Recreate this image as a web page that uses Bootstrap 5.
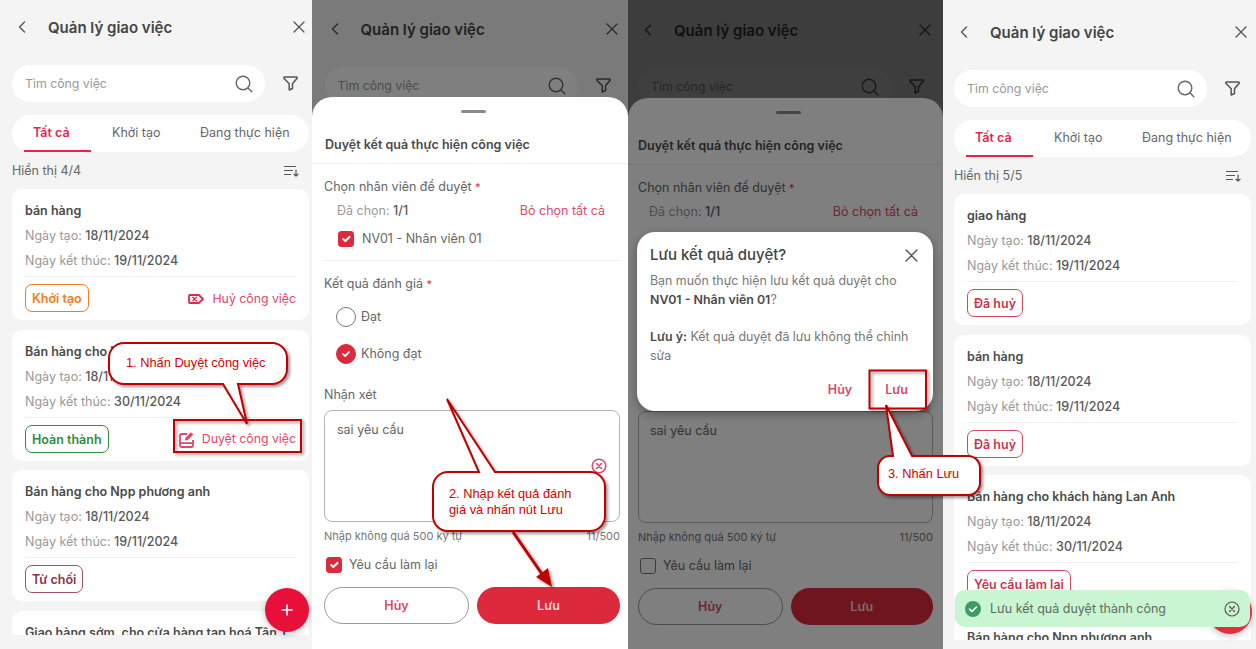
<!DOCTYPE html>
<html lang="vi">
<head>
  <meta charset="UTF-8">
  <meta name="viewport" content="width=device-width, initial-scale=1">
  <title>Quản lý giao việc</title>
  <link href="https://cdn.jsdelivr.net/npm/bootstrap@5.3.0/dist/css/bootstrap.min.css" rel="stylesheet">
  <style>
    body {
      margin: 0;
      width: 1256px;
      height: 649px;
      overflow: hidden;
      background: #f4f4f4;
      font-family: Inter, "Noto Sans", sans-serif;
      font-size: 12.5px;
      color: #555;
      position: relative;
    }

    .phone { position: relative; height: 649px; overflow: hidden; background: #f4f4f4; flex: none; }
    .phone-inner { width: 297px; margin-left: var(--pl); padding-top: var(--pt); }
    .p1 { width: 312px; --pl: 12px; --pt: 0px; --sw: 297px; }
    .p2 { width: 316px; --pl: 12.5px; --pt: 2px; --sw: 296px; }
    .p3 { width: 315px; --pl: 10px; --pt: 3px; --sw: 295px; }
    .p4 { width: 313px; --pl: 11px; --pt: 5px; --sw: 297px; }

    .top-bar { height: 54px; padding-top: 2px; position: relative; }
    .top-bar .ic-back { position: absolute; left: 4px; top: 21px; }
    .top-bar .ic-close { position: absolute; left: 281px; top: 21px; }
    .top-title { margin-left: 36px; font-size: 15px; font-weight: 600; color: #444; }

    .search-row { margin-top: 11px; height: 37px; }
    .search-box { width: 253px; height: 37px; background: #fff; border-radius: 19px; padding: 0 12px 0 13px; color: #999; }
    .search-box span { margin-top: 2px; font-size: 12.3px; }
    .search-row .ic-filter { margin-left: 18px; }

    .tab-strip { margin-top: 13px; height: 37px; background: #fff; border-radius: 19px; flex-wrap: nowrap; }
    .tab-link { display: block; height: 37px; line-height: 35px; color: #666; white-space: nowrap; text-decoration: none; }
    .tab-link.on { width: 67px; margin-left: 12px; padding-left: 9px; color: #e5264b; font-weight: 600; border-bottom: 2px solid #e5264b; }
    .tab-link.t2 { margin-left: 21px; }
    .tab-link.t3 { margin-left: 39.5px; }

    .show-row { height: 37px; color: #666; padding-right: 10px; }
    .show-row span { margin-top: 2px; }

    .task-list { height: 446px; overflow: hidden; }
    .task-card { height: 131px; margin-bottom: 9.5px; border: 0; border-radius: 10px; padding: 12px 13px 0; }
    .task-name { line-height: 20px; font-weight: 600; color: #4a4a4a; white-space: nowrap; }
    .task-line { line-height: 20px; margin-top: 5px; color: #999; }
    .task-line b { font-weight: 500; color: #595959; }
    .task-foot { margin-top: 5px; padding-top: 7px; border-top: 1px solid #eee; }
    .tag-state { height: 28px; line-height: 27px; padding: 0 6px; border: 1.5px solid; border-radius: 7px; font-weight: 600; background: #fff; }
    .tag-orange { color: #f47b20; border-color: #f47b20; }
    .tag-green { color: #2f8b3f; border-color: #2f8b3f; }
    .tag-plum { color: #8f2f4a; border-color: #a05068; }
    .tag-red { color: #c9344d; border-color: #d0485f; }
    .task-act { color: #e0476a; gap: 8px; font-size: 12.3px; margin-top: 2px; }

    .fab { position: absolute; width: 44px; height: 44px; border-radius: 50%; background: #e8103a; box-shadow: 0 2px 6px rgba(0,0,0,.25); }
    .p1 .fab { left: 265px; top: 588px; }
    .p4 .fab { left: 265px; top: 590px; background: #e0303f; }

    .backdrop { position: absolute; inset: 0; background: rgba(0,0,0,.5); }

    .sheet { position: absolute; left: 0; right: 0; top: 97px; bottom: 0; background: #fff; border-radius: 20px 20px 0 0; padding-top: 13px; }
    .p3 .sheet { top: 98px; }
    .sheet-body { width: var(--sw); margin-left: 12px; }
    .p3 .sheet-body { margin-left: 10px; }
    .sheet-handle { width: 25px; height: 3px; margin: 0 auto; background: #8a8a8a; border-radius: 2px; position: relative; left: 3px; }
    .sheet-title { margin-top: 22px; margin-bottom: 8px; padding-left: 1px; line-height: 20px; font-weight: 600; color: #4a4a4a; }
    .p3 .sheet-title { padding-left: 0; }
    .sheet-rule { border-top: 1px solid #eee; }
    .f-label { line-height: 20px; color: #666; }
    .f-label i { font-style: normal; font-size: 11px; color: #e5264b; }
    .l-a { margin-top: 13px; }
    .l-b { margin-top: 4px; padding: 0 15px 0 13px; line-height: 20px; color: #999; }
    .p3 .l-b { padding-left: 11px; }
    .l-b b { font-weight: 500; color: #595959; }
    .l-b span { color: #e0476a; }
    .l-c { margin-top: 8px; padding-left: 14px; height: 20px; color: #666; gap: 8px; }
    .l-d { margin-top: 11px; margin-bottom: 13px; }
    .l-e { margin-top: 12px; height: 22px; padding-left: 12px; gap: 5px; color: #666; }
    .l-f { margin-top: 15px; }
    .l-g { margin-top: 20px; }

    .form-check-input { width: 16px; height: 16px; margin: 0; flex: none; border-radius: 3px; border-color: #777; }
    .form-check-input:checked { background-color: #dc2a3c; border-color: #dc2a3c; }
    .form-check-input[type=radio] { width: 20px; height: 20px; border-radius: 50%; }
    .form-check-input[type=radio]:checked {
      background-size: 12px;
      background-image: url("data:image/svg+xml,%3csvg xmlns='http://www.w3.org/2000/svg' viewBox='0 0 20 20'%3e%3cpath fill='none' stroke='%23fff' stroke-linecap='round' stroke-linejoin='round' stroke-width='3' d='m5 10 3.5 3.5L15 7'/%3e%3c/svg%3e");
    }

    .note-wrap { margin-top: 4.500px; position: relative; }
    .note-box { height: 112px; padding: 10px 12px 8px; border: 1px solid #b5b5b5; border-radius: 8px; font-size: 12.5px; color: #666; resize: none; box-shadow: none; }
    .p3 .note-box { padding-left: 11px; }
    .note-clear { position: absolute; right: 13px; top: 48px; }
    .note-hint { margin-top: 5px; line-height: 18px; font-size: 11px; color: #777; }
    .l-h { margin-top: 10.500px; height: 20px; padding-left: 2px; gap: 7px; color: #666; }
    .sheet-btns { margin-top: 12px; gap: 8px; }
    .btn-pill { flex: 1; height: 37px; padding: 2px 0 0; border-radius: 19px; font-size: 12.5px; font-weight: 600; }
    .btn-ghost { background: #fff; border: 1px solid #9a9a9a; color: #e0476a; }
    .btn-fill { background: #dc2a3c; border: 0; color: #f6d6da; }

    .confirm-box { position: absolute; left: 9px; top: 232px; width: 296px; height: 179px; background: #fff; border-radius: 18px; padding: 13px 13px 0; box-shadow: 0 3px 10px rgba(0,0,0,.3); }
    .confirm-title { font-size: 15px; line-height: 20px; font-weight: 500; color: #444; }
    .confirm-x { margin-right: 2px; }
    .confirm-text { margin-top: 7px; line-height: 18.7px; font-size: 12.4px; color: #777; }
    .confirm-text b { font-weight: 600; color: #4a4a4a; }
    .confirm-btns { position: absolute; right: 25px; top: 148px; gap: 33px; font-weight: 600; line-height: 20px; color: #d9476a; }

    .toast-ok { position: absolute; left: 12px; top: 590px; width: 295px; height: 37px; padding: 0 10px; gap: 9px; background: #c9f5d3; border-radius: 10px; color: #5f6b63; }
    .toast-ok span { margin-top: 2px; }

    .note-layer { position: absolute; left: 0; top: 0; z-index: 10; pointer-events: none; }
    .note-layer text { font-family: "Liberation Sans", Arial, sans-serif; font-size: 12.8px; fill: #d40000; }
  </style>
</head>
<body>

<svg width="0" height="0" class="d-block position-absolute">
  <defs>
    <symbol id="i-back" viewBox="0 0 12 12"><path d="M8.5 1 3.5 6l5 5" fill="none" stroke="#555" stroke-width="1.4" stroke-linecap="round" stroke-linejoin="round"/></symbol>
    <symbol id="i-close" viewBox="0 0 12 12"><path d="M1 1l10 10M11 1 1 11" fill="none" stroke="#555" stroke-width="1.3" stroke-linecap="round"/></symbol>
    <symbol id="i-search" viewBox="0 0 18 18"><circle cx="8" cy="8" r="6.8" fill="none" stroke="#666" stroke-width="1.4"/><path d="m13 13 3.8 3.8" stroke="#666" stroke-width="1.4" stroke-linecap="round"/></symbol>
    <symbol id="i-filter" viewBox="0 0 15 15"><path d="M1.500 1h12a.8.8 0 0 1 .6 1.300L9.500 7.800V12.500L6.200 14V7.800L.9 2.300A.8.8 0 0 1 1.500 1z" fill="none" stroke="#555" stroke-width="1.500" stroke-linejoin="round"/></symbol>
    <symbol id="i-sort" viewBox="0 0 15 12"><path d="M.5 1.500h11M.5 5.500h8M.5 9.500h6M12 5v6M10 9.200 12 11l2-1.800" fill="none" stroke="#555" stroke-width="1.200" stroke-linecap="round" stroke-linejoin="round"/></symbol>
    <symbol id="i-tag" viewBox="0 0 16 10"><path d="M2 1h8.800L15 5l-4.200 4H2a1 1 0 0 1-1-1V2a1 1 0 0 1 1-1z" fill="none" stroke="#e5264b" stroke-width="1.800" stroke-linejoin="round"/><path d="m5 3.300 3.400 3.400m0-3.400L5 6.700" stroke="#e5264b" stroke-width="1.500" stroke-linecap="round"/></symbol>
    <symbol id="i-edit" viewBox="0 0 15 17"><path d="M8 3H2.500A1.500 1.500 0 0 0 1 4.500v10A1.500 1.500 0 0 0 2.500 16h10a1.500 1.500 0 0 0 1.500-1.500V9M1 12.200h13" fill="none" stroke="#e0476a" stroke-width="1.800"/><path d="m6 9.500.5-2.700L12 1.200l2.300 2.200-5.500 5.500z" fill="#e0476a"/></symbol>
    <symbol id="i-plus" viewBox="0 0 12 12"><path d="M6 1v10M1 6h10" stroke="#fff" stroke-width="1.600" stroke-linecap="round"/></symbol>
    <symbol id="i-clear" viewBox="0 0 16 16"><circle cx="8" cy="8" r="6.800" fill="none" stroke="#e0476a" stroke-width="1.500"/><path d="m5.500 5.500 5 5m0-5-5 5" stroke="#e0476a" stroke-width="1.600" stroke-linecap="round"/></symbol>
    <symbol id="i-ok" viewBox="0 0 16 16"><circle cx="8" cy="8" r="8" fill="#3f9a68"/><path d="m4.500 8.200 2.400 2.300 4.500-4.500" fill="none" stroke="#fff" stroke-width="1.600" stroke-linecap="round" stroke-linejoin="round"/></symbol>
    <symbol id="i-toast-x" viewBox="0 0 16 16"><circle cx="8" cy="8" r="7" fill="none" stroke="#555" stroke-width="1.200"/><path d="m5.500 5.500 5 5m0-5-5 5" stroke="#555" stroke-width="1.300" stroke-linecap="round"/></symbol>
  </defs>
</svg>

<div class="d-flex">

  <!-- man 1: danh sach -->
  <div class="phone p1">
    <div class="phone-inner">
      <div class="top-bar d-flex align-items-center">
        <svg class="ic-back" width="12" height="12"><use href="#i-back"/></svg>
        <span class="top-title">Quản lý giao việc</span>
        <svg class="ic-close" width="12" height="12"><use href="#i-close"/></svg>
      </div>
      <div class="search-row d-flex align-items-center">
        <div class="search-box d-flex align-items-center justify-content-between"><span>Tìm công việc</span><svg width="18" height="18"><use href="#i-search"/></svg></div>
        <svg class="ic-filter" width="15" height="15"><use href="#i-filter"/></svg>
      </div>
      <nav class="tab-strip nav">
        <a class="tab-link on">Tất cả</a><a class="tab-link t2">Khởi tạo</a><a class="tab-link t3">Đang thực hiện</a>
      </nav>
      <div class="show-row d-flex align-items-center justify-content-between"><span>Hiển thị 4/4</span><svg width="15" height="12"><use href="#i-sort"/></svg></div>
      <div class="task-list">
        <div class="task-card card">
          <div class="task-name">bán hàng</div>
          <div class="task-line">Ngày tạo: <b>18/11/2024</b></div>
          <div class="task-line">Ngày kết thúc: <b>19/11/2024</b></div>
          <div class="task-foot d-flex align-items-center justify-content-between">
            <span class="tag-state tag-orange">Khởi tạo</span>
            <span class="task-act d-flex align-items-center"><svg width="16" height="10"><use href="#i-tag"/></svg>Huỷ công việc</span>
          </div>
        </div>
        <div class="task-card card">
          <div class="task-name">Bán hàng cho khách hàng Lan Anh</div>
          <div class="task-line">Ngày tạo: <b>18/11/2024</b></div>
          <div class="task-line">Ngày kết thúc: <b>30/11/2024</b></div>
          <div class="task-foot d-flex align-items-center justify-content-between">
            <span class="tag-state tag-green">Hoàn thành</span>
            <span class="task-act d-flex align-items-center"><svg width="15" height="17"><use href="#i-edit"/></svg>Duyệt công việc</span>
          </div>
        </div>
        <div class="task-card card">
          <div class="task-name">Bán hàng cho Npp phương anh</div>
          <div class="task-line">Ngày tạo: <b>18/11/2024</b></div>
          <div class="task-line">Ngày kết thúc: <b>19/11/2024</b></div>
          <div class="task-foot d-flex align-items-center">
            <span class="tag-state tag-plum">Từ chối</span>
          </div>
        </div>
        <div class="task-card card">
          <div class="task-name">Giao hàng sớm, cho cửa hàng tạp hoá Tân T</div>
        </div>
      </div>
    </div>
    <div class="fab d-flex align-items-center justify-content-center"><svg width="12" height="12"><use href="#i-plus"/></svg></div>
  </div>

  <!-- man 2: form duyet -->
  <div class="phone p2">
    <div class="phone-inner">
      <div class="top-bar d-flex align-items-center">
        <svg class="ic-back" width="12" height="12"><use href="#i-back"/></svg>
        <span class="top-title">Quản lý giao việc</span>
        <svg class="ic-close" width="12" height="12"><use href="#i-close"/></svg>
      </div>
      <div class="search-row d-flex align-items-center">
        <div class="search-box d-flex align-items-center justify-content-between"><span>Tìm công việc</span><svg width="18" height="18"><use href="#i-search"/></svg></div>
        <svg class="ic-filter" width="15" height="15"><use href="#i-filter"/></svg>
      </div>
    </div>
    <div class="backdrop"></div>
    <div class="sheet">
      <div class="sheet-handle"></div>
      <div class="sheet-body"><div class="sheet-title">Duyệt kết quả thực hiện công việc</div></div>
      <div class="sheet-rule"></div>
      <div class="sheet-body">
        <div class="f-label l-a">Chọn nhân viên để duyệt <i>*</i></div>
        <div class="l-b d-flex justify-content-between"><div>Đã chọn: <b>1/1</b></div><span>Bỏ chọn tất cả</span></div>
        <div class="l-c d-flex align-items-center"><input class="form-check-input" type="checkbox" checked>NV01 - Nhân viên 01</div>
        <div class="sheet-rule l-d"></div>
        <div class="f-label">Kết quả đánh giá <i>*</i></div>
        <div class="l-e d-flex align-items-center"><input class="form-check-input" type="radio" name="kq2">Đạt</div>
        <div class="l-e l-f d-flex align-items-center"><input class="form-check-input" type="radio" name="kq2" checked>Không đạt</div>
        <div class="f-label l-g">Nhận xét</div>
        <div class="note-wrap">
          <textarea class="note-box form-control">sai yêu cầu</textarea>
          <svg class="note-clear" width="16" height="16"><use href="#i-clear"/></svg>
        </div>
        <div class="note-hint d-flex justify-content-between"><span>Nhập không quá 500 ký tự</span><span>11/500</span></div>
        <div class="l-h d-flex align-items-center"><input class="form-check-input" type="checkbox" checked>Yêu cầu làm lại</div>
        <div class="sheet-btns d-flex">
          <button class="btn btn-pill btn-ghost">Hủy</button>
          <button class="btn btn-pill btn-fill">Lưu</button>
        </div>
      </div>
    </div>
  </div>

  <!-- man 3: hop thoai xac nhan -->
  <div class="phone p3">
    <div class="phone-inner">
      <div class="top-bar d-flex align-items-center">
        <svg class="ic-back" width="12" height="12"><use href="#i-back"/></svg>
        <span class="top-title">Quản lý giao việc</span>
        <svg class="ic-close" width="12" height="12"><use href="#i-close"/></svg>
      </div>
      <div class="search-row d-flex align-items-center">
        <div class="search-box d-flex align-items-center justify-content-between"><span>Tìm công việc</span><svg width="18" height="18"><use href="#i-search"/></svg></div>
        <svg class="ic-filter" width="15" height="15"><use href="#i-filter"/></svg>
      </div>
    </div>
    <div class="backdrop"></div>
    <div class="sheet">
      <div class="sheet-handle"></div>
      <div class="sheet-body"><div class="sheet-title">Duyệt kết quả thực hiện công việc</div></div>
      <div class="sheet-rule"></div>
      <div class="sheet-body">
        <div class="f-label l-a">Chọn nhân viên để duyệt <i>*</i></div>
        <div class="l-b d-flex justify-content-between"><div>Đã chọn: <b>1/1</b></div><span>Bỏ chọn tất cả</span></div>
        <div class="l-c d-flex align-items-center"><input class="form-check-input" type="checkbox" checked>NV01 - Nhân viên 01</div>
        <div class="sheet-rule l-d"></div>
        <div class="f-label">Kết quả đánh giá <i>*</i></div>
        <div class="l-e d-flex align-items-center"><input class="form-check-input" type="radio" name="kq3">Đạt</div>
        <div class="l-e l-f d-flex align-items-center"><input class="form-check-input" type="radio" name="kq3" checked>Không đạt</div>
        <div class="f-label l-g">Nhận xét</div>
        <div class="note-wrap">
          <textarea class="note-box form-control">sai yêu cầu</textarea>
          <svg class="note-clear" width="16" height="16"><use href="#i-clear"/></svg>
        </div>
        <div class="note-hint d-flex justify-content-between"><span>Nhập không quá 500 ký tự</span><span>11/500</span></div>
        <div class="l-h d-flex align-items-center"><input class="form-check-input" type="checkbox">Yêu cầu làm lại</div>
        <div class="sheet-btns d-flex">
          <button class="btn btn-pill btn-ghost">Hủy</button>
          <button class="btn btn-pill btn-fill">Lưu</button>
        </div>
      </div>
    </div>
    <div class="backdrop"></div>
    <div class="confirm-box">
      <div class="d-flex align-items-center justify-content-between">
        <div class="confirm-title">Lưu kết quả duyệt?</div>
        <svg class="confirm-x" width="13" height="13"><use href="#i-close"/></svg>
      </div>
      <div class="confirm-text">Bạn muốn thực hiện lưu kết quả duyệt cho<br><b>NV01 - Nhân viên 01</b>?<br><br><b>Lưu ý:</b> Kết quả duyệt đã lưu không thể chỉnh sửa</div>
      <div class="confirm-btns d-flex"><span>Hủy</span><span>Lưu</span></div>
    </div>
  </div>

  <!-- man 4: ket qua -->
  <div class="phone p4">
    <div class="phone-inner">
      <div class="top-bar d-flex align-items-center">
        <svg class="ic-back" width="12" height="12"><use href="#i-back"/></svg>
        <span class="top-title">Quản lý giao việc</span>
        <svg class="ic-close" width="12" height="12"><use href="#i-close"/></svg>
      </div>
      <div class="search-row d-flex align-items-center">
        <div class="search-box d-flex align-items-center justify-content-between"><span>Tìm công việc</span><svg width="18" height="18"><use href="#i-search"/></svg></div>
        <svg class="ic-filter" width="15" height="15"><use href="#i-filter"/></svg>
      </div>
      <nav class="tab-strip nav">
        <a class="tab-link on">Tất cả</a><a class="tab-link t2">Khởi tạo</a><a class="tab-link t3">Đang thực hiện</a>
      </nav>
      <div class="show-row d-flex align-items-center justify-content-between"><span>Hiển thị 5/5</span><svg width="15" height="12"><use href="#i-sort"/></svg></div>
      <div class="task-list">
        <div class="task-card card">
          <div class="task-name">giao hàng</div>
          <div class="task-line">Ngày tạo: <b>18/11/2024</b></div>
          <div class="task-line">Ngày kết thúc: <b>19/11/2024</b></div>
          <div class="task-foot d-flex align-items-center"><span class="tag-state tag-red">Đã huỷ</span></div>
        </div>
        <div class="task-card card">
          <div class="task-name">bán hàng</div>
          <div class="task-line">Ngày tạo: <b>18/11/2024</b></div>
          <div class="task-line">Ngày kết thúc: <b>19/11/2024</b></div>
          <div class="task-foot d-flex align-items-center"><span class="tag-state tag-red">Đã huỷ</span></div>
        </div>
        <div class="task-card card">
          <div class="task-name">Bán hàng cho khách hàng Lan Anh</div>
          <div class="task-line">Ngày tạo: <b>18/11/2024</b></div>
          <div class="task-line">Ngày kết thúc: <b>30/11/2024</b></div>
          <div class="task-foot d-flex align-items-center"><span class="tag-state tag-red">Yêu cầu làm lại</span></div>
        </div>
        <div class="task-card card">
          <div class="task-name">Bán hàng cho Npp phương anh</div>
        </div>
      </div>
    </div>
    <div class="fab"></div>
    <div class="toast-ok d-flex align-items-center">
      <svg width="16" height="16"><use href="#i-ok"/></svg>
      <span class="flex-grow-1">Lưu kết quả duyệt thành công</span>
      <svg width="16" height="16"><use href="#i-toast-x"/></svg>
    </div>
  </div>

</div>

<!-- chu thich huong dan ve de len man hinh -->
<svg class="note-layer" width="1256" height="649">
  <defs>
    <filter id="soft" x="-20%" y="-20%" width="140%" height="140%"><feDropShadow dx="2" dy="2" stdDeviation="1.500" flood-color="#000" flood-opacity=".4"/></filter>
  </defs>
  <g filter="url(#soft)" fill="none" stroke="#c00000" stroke-width="2">
    <rect x="174" y="420" width="127" height="32"/>
    <rect x="869.500" y="370.500" width="56.500" height="38"/>
    <path fill="#fff" d="M124 343H272a15 15 0 0 1 15 15v11a15 15 0 0 1-15 15H238L247 424 223 384H124a15 15 0 0 1-15-15v-11a15 15 0 0 1 15-15z"/>
    <path fill="#fff" d="M448 472H479L447 399 495 472H590a15 15 0 0 1 15 15v29a15 15 0 0 1-15 15H448a15 15 0 0 1-15-15v-29a15 15 0 0 1 15-15z"/>
    <path fill="#fff" d="M890 456H893L886 405 912 456H968a12 12 0 0 1 12 12v15a12 12 0 0 1-12 12H890a12 12 0 0 1-12-12v-15a12 12 0 0 1 12-12z"/>
    <path d="M513 532 544 577" stroke-width="3"/>
    <path fill="#c00000" stroke="none" d="M552 587 536 577 548 568z"/>
  </g>
  <text x="126" y="367">1. Nhấn Duyệt công việc</text>
  <text x="449" y="498">2. Nhập kết quả đánh</text>
  <text x="449" y="514">giá và nhấn nút Lưu</text>
  <text x="888" y="478">3. Nhấn Lưu</text>
</svg>

<script src="https://cdn.jsdelivr.net/npm/bootstrap@5.3.0/dist/js/bootstrap.bundle.min.js"></script>
</body>
</html>
